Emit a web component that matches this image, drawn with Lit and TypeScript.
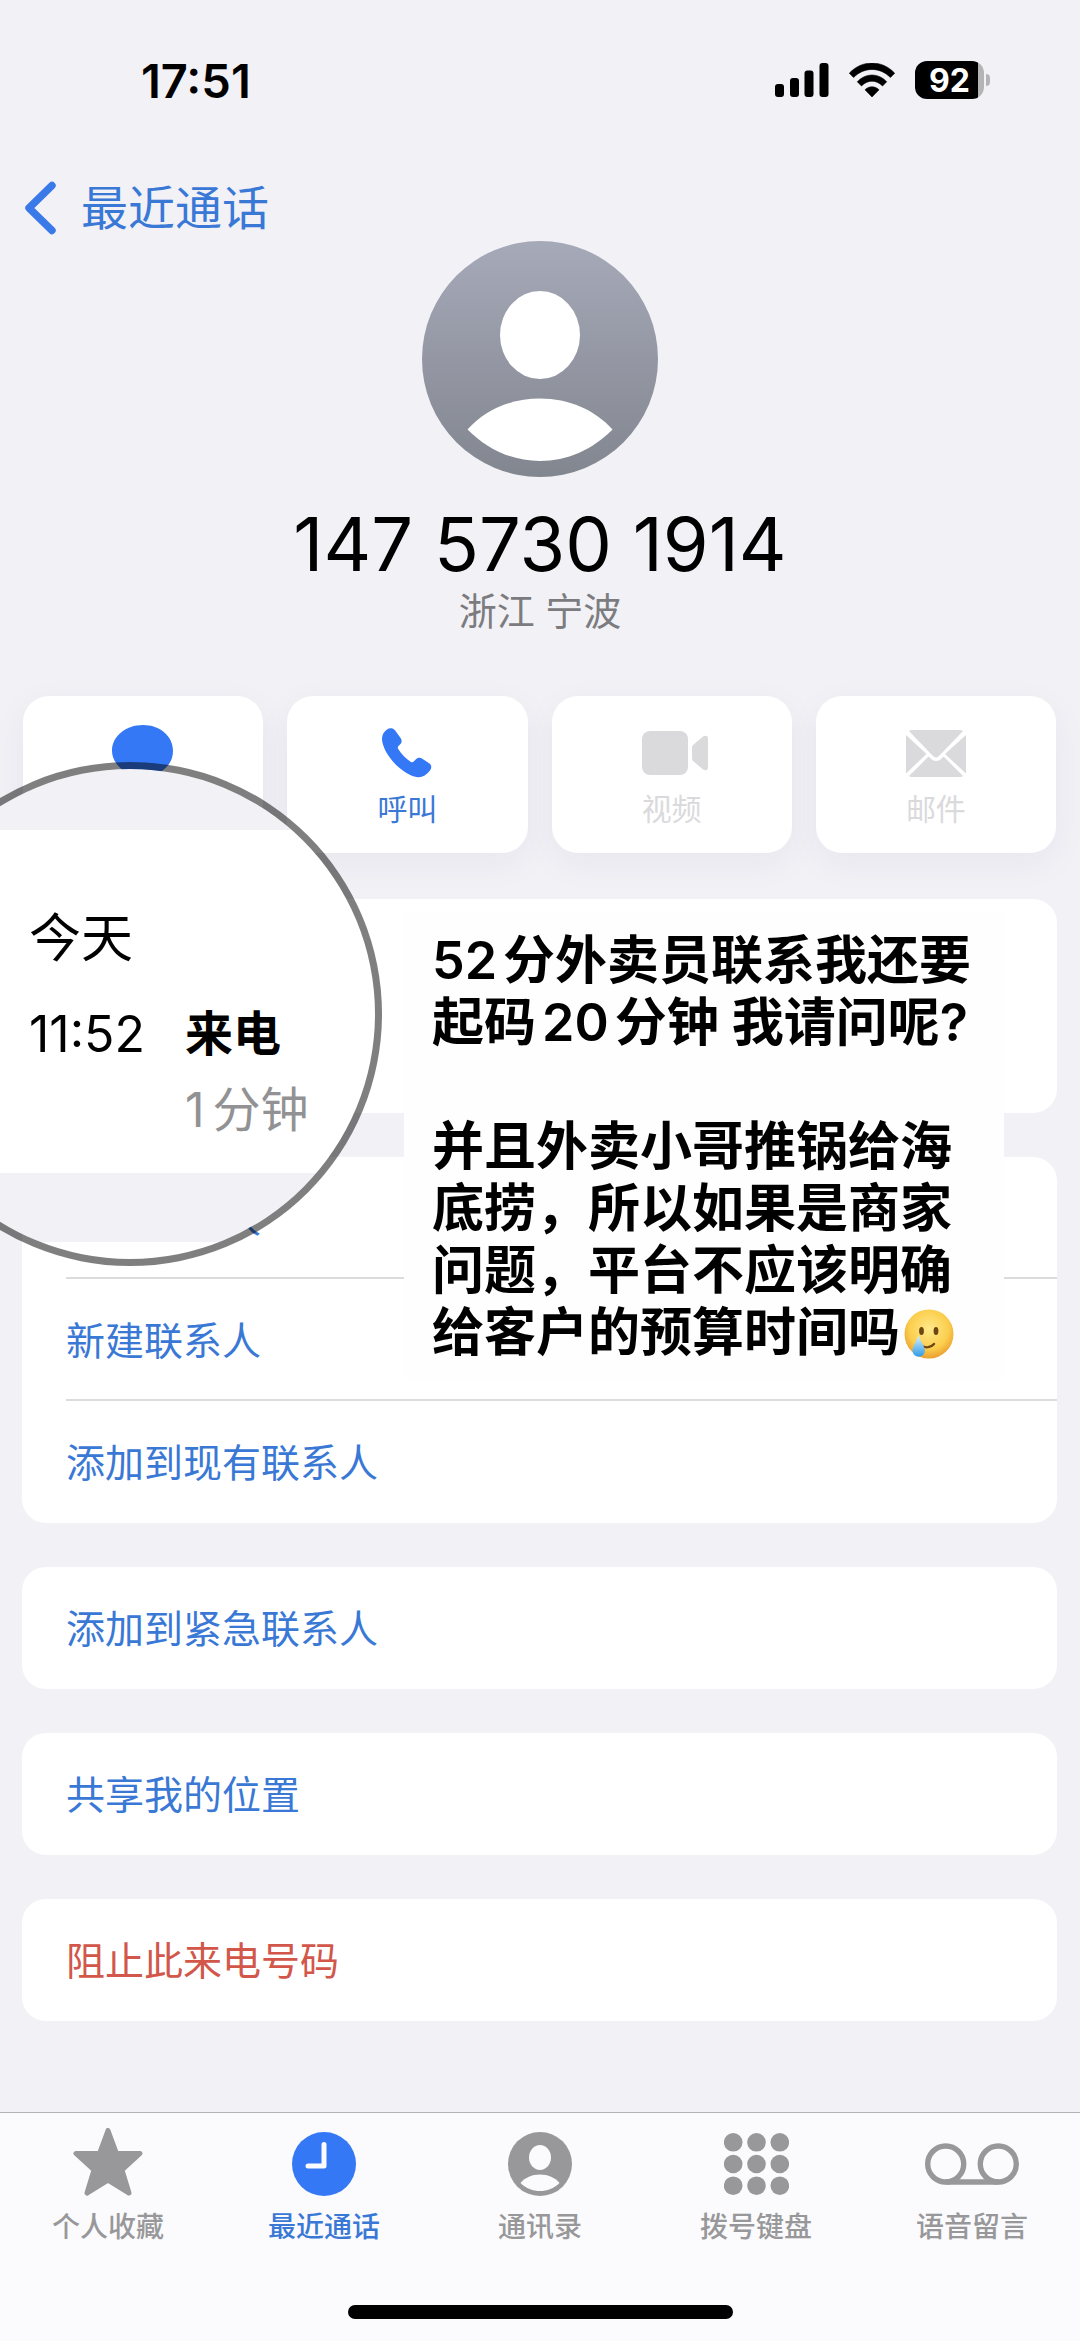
import { LitElement, html, css, svg } from "lit";
import { customElement, property } from "lit/decorators.js";

const iconArt = {
  back: { box: "0 0 32 54", art: svg`<path d="M28 4.500 5 27l23 22.500" fill="none" stroke="currentColor" stroke-width="7.400" stroke-linecap="round" stroke-linejoin="round"/>` },
  message: { box: "0 0 62 56", art: svg`<path d="M31 0C48 0 61 11 61 26S48 51 31 51c-3 0-6 0-9-1-4 3-9 5-15 5 3-3 5-6 5-9C5 41 0 34 0 26 0 11 14 0 31 0Z" fill="currentColor"/>` },
  call: { box: "0 0 50 50", art: svg`<path d="M5 1.500C7.500-.3 11-.3 13 2.300L18.600 10c1.600 2.300 1.300 4.800-.6 6.600l-1.600 1.500c-.8.800-.8 1.900-.2 3 3.300 5.300 7.700 9.700 12.700 12.800 1 .6 2 .5 2.800-.3l2-2.200c1.800-1.900 4.200-2.300 6.600-.7l7.200 4.900c2 1.400 2.500 4.400.5 6.900C44.500 47 40.500 49.500 36 49.200 29 48.700 18.500 42.500 10.500 33 4.500 26 .3 17.500 0 11.200-.1 7 2 3.500 5 1.500Z" fill="currentColor"/>` },
  video: { box: "-6 0 72 44", art: svg`<rect width="46" height="44" rx="8" fill="currentColor"/><path d="M50 17c0-1.500.5-2.500 1.600-3.400L60.500 6C63 4 66 4.500 66 7.500v29c0 3-3 3.500-5.500 1.500l-8.900-7.600C50.500 29.500 50 28.500 50 27Z" fill="currentColor"/>` },
  mail: { box: "0 0 60 47", art: svg`<path d="M3 1C4 .3 5 0 6.500 0h47c1.500 0 2.500.3 3.500 1L33.500 25.500c-2.600 2.600-4.500 2.600-7 0ZM0 5l20.500 19L0 43.500ZM60 5v38.500L39 24ZM22.500 26.500l2.500 2.300c3.500 3 7 3 10.300 0l2.300-2.300L57 46c-1 .7-2 1-3.500 1h-47c-1.500 0-2.500-.3-3.500-1Z" fill="currentColor"/>` },
  star: { box: "0 0 70 68", art: svg`<path d="M35 2.500 43.500 25.500H67L49 42 56 65 35 52 14 65l7-23L3 25.500H26.500Z" fill="currentColor" stroke="currentColor" stroke-width="5" stroke-linejoin="round"/>` },
  clock: { box: "0 0 64 64", art: svg`<circle cx="32" cy="32" r="32" fill="currentColor"/><path d="M32 12.500v21.500H16" fill="none" stroke="#fbfbfd" stroke-width="5" stroke-linecap="round" stroke-linejoin="round"/>` },
  person: { box: "0 0 64 64", art: svg`<circle cx="32" cy="32" r="32" fill="currentColor"/><ellipse cx="32" cy="25.500" rx="11" ry="12.500" fill="#fbfbfd"/><path d="M12.500 51C17 45.500 24 42.500 32 42.500S47 45.500 51.500 51C46 56.500 39 59 32 59s-14-2.500-19.500-8Z" fill="#fbfbfd"/>` },
  keypad: { box: "0 0 65 62", art: svg`${[9.2, 32.5, 55.8].map(x => [9.3, 31, 52.7].map(y => svg`<circle cx=${x} cy=${y} r="9.300" fill="currentColor"/>`))}` },
  voicemail: { box: "0 0 94 42", art: svg`<g fill="none" stroke="currentColor" stroke-width="5.400"><circle cx="20.700" cy="21" r="18"/><circle cx="73.300" cy="21" r="18"/><path d="M20.700 39h52.600"/></g>` },
  signal: { box: "0 0 54 34", art: svg`<rect y="21" width="9" height="13" rx="3"/><rect x="15" y="15" width="9" height="19" rx="3"/><rect x="29.500" y="7.500" width="9" height="26.500" rx="3"/><rect x="44.500" width="9" height="34" rx="3"/>` },
  wifi: { box: "0 0 46 34", art: svg`<path d="M23 34l-7-7.200c3.800-4 10.200-4 14 0ZM8.300 18.800c8.200-9 21.200-9 29.400 0l-4.200 4.200c-6-6.400-15-6.400-21 0ZM.3 10.200C13-3.400 33-3.400 45.700 10.200L41.400 14.500c-10.400-10.700-26.400-10.700-36.800 0Z" stroke="#000" stroke-width=".6" stroke-linejoin="round"/>` },
  avatar: { box: "0 0 236 236", art: svg`<defs><linearGradient id="shade" x1="0" y1="0" x2="0" y2="1"><stop offset="0" stop-color="#a6a9b8"/><stop offset="1" stop-color="#82868f"/></linearGradient></defs><circle cx="118" cy="118" r="118" fill="url(#shade)"/><ellipse cx="118" cy="94" rx="40" ry="44" fill="#fff"/><path d="M45.500 188.500C63 169 89 157.500 118 157.500s55 11.500 72.500 31C170 209 145 220 118 220s-52-11-72.500-31.500Z" fill="#fff"/>` },
  tearful: { box: "0 0 50 50", art: svg`<defs><radialGradient id="face" cx=".5" cy=".4" r=".62"><stop offset="0" stop-color="#ffe98a"/><stop offset=".65" stop-color="#fbce4d"/><stop offset="1" stop-color="#e99a2c"/></radialGradient><linearGradient id="drop" x1="0" y1="0" x2="0" y2="1"><stop offset="0" stop-color="#d9f3ff"/><stop offset="1" stop-color="#2f9be6"/></linearGradient></defs><circle cx="25" cy="25" r="24.500" fill="url(#face)"/><ellipse cx="17.500" cy="22" rx="2.400" ry="4" fill="#6d4612"/><ellipse cx="32" cy="22" rx="2.400" ry="4" fill="#6d4612"/><path d="M19 37.500c4 1.500 8.500.5 11-2.500" fill="none" stroke="#6d4612" stroke-width="2.400" stroke-linecap="round"/><path d="M14.500 26c-2 7-6 11-6 15.500a6.200 6.200 0 0 0 12.400 0c0-4.500-4.400-8.500-6.400-15.500Z" fill="url(#drop)"/>` },
};
type IconName = keyof typeof iconArt;

@customElement("phone-icon")
export class PhoneIcon extends LitElement {
  @property() name: IconName = "star";
  static styles = css`
    :host { display: block; flex: none; }
    svg { display: block; width: 100%; height: 100%; }
  `;
  render() {
    const { box, art } = iconArt[this.name];
    return html`<svg viewBox=${box} aria-hidden="true">${art}</svg>`;
  }
}

const actions: { icon: IconName; label: string; off?: boolean }[] = [
  { icon: "message", label: "" },
  { icon: "call", label: "呼叫" },
  { icon: "video", label: "视频", off: true },
  { icon: "mail", label: "邮件", off: true },
];

const groups: string[][] = [
  ["共享联系人", "新建联系人", "添加到现有联系人"],
  ["添加到紧急联系人"],
  ["共享我的位置"],
];

const tabs: { icon: IconName; label: string; on?: boolean }[] = [
  { icon: "star", label: "个人收藏" },
  { icon: "clock", label: "最近通话", on: true },
  { icon: "person", label: "通讯录" },
  { icon: "keypad", label: "拨号键盘" },
  { icon: "voicemail", label: "语音留言" },
];

@customElement("app-root")
export class AppRoot extends LitElement {
  static styles = css`
    :host {
      --page: #f1f1f6;
      --blue: #3478f6;
      --link: #3a78d6;
      display: flex;
      flex-direction: column;
      min-height: 100vh;
      overflow: hidden;
      background: var(--page);
      color: #000;
      font-family: Inter, "Noto Sans CJK SC", sans-serif;
    }
    * { box-sizing: border-box; }
    button { font: inherit; border: 0; padding: 0; margin: 0; background: none; color: inherit; }
    a { color: inherit; text-decoration: none; }

    .status { display: flex; justify-content: space-between; align-items: center; height: 160px; padding: 0 90px 0 141px; }
    .clock { font-size: 47px; font-weight: 600; }
    .radios { display: flex; align-items: center; }
    .signal { width: 54px; height: 34px; }
    .wifi { width: 46px; height: 34px; margin: 0 20px; }
    .battery {
      display: flex; align-items: center; justify-content: center;
      width: 69px; height: 38px; border-radius: 12px;
      background: linear-gradient(90deg, #000 63px, #b4b4b6 63px);
      color: #fff; font-size: 32px; font-weight: 700;
    }
    .nub { width: 4px; height: 12px; margin-left: 2px; border-radius: 0 6px 6px 0; background: #b4b4b6; }

    .nav { display: flex; height: 66px; margin-top: 15px; padding: 0 24px; }
    .back { display: flex; align-items: center; gap: 25px; color: var(--link); font-size: 47px; line-height: 66px; }
    .chevron { width: 32px; height: 54px; color: #3a7ae8; }

    .profile { display: flex; flex-direction: column; align-items: center; }
    .avatar { width: 236px; height: 236px; }
    .number { margin: 27px 0 0; font-size: 74px; font-weight: 400; line-height: 80px; }
    .region { margin: 0; font-size: 38px; line-height: 54px; color: #7c7c80; }

    .actions { display: grid; grid-template-columns: repeat(4, 1fr); gap: 24px; margin-top: 58px; padding: 0 24px 0 23px; }
    .action {
      display: flex; flex-direction: column; align-items: center;
      height: 157px; padding-top: 27px; border-radius: 26px;
      background: #fff; box-shadow: 0 10px 36px rgba(40, 40, 70, 0.05);
      color: var(--blue); font-size: 30px; line-height: 40px;
    }
    .off { color: #dadadc; }
    .glyph { display: flex; align-items: center; justify-content: center; height: 60px; }
    .act-message { width: 62px; height: 56px; }
    .act-call { width: 50px; height: 50px; }
    .act-video { width: 72px; height: 44px; }
    .act-mail { width: 60px; height: 47px; }
    .caption { margin-top: 6px; color: var(--link); }
    .off .caption { color: inherit; }

    .list { display: flex; flex-direction: column; gap: 44px; margin-top: 46px; padding: 0 23px 0 22px; }
    .history { position: relative; z-index: 1; height: 214px; border-radius: 24px; background: #fff; }
    .group { display: flex; flex-direction: column; border-radius: 24px; background: #fff; overflow: hidden; }
    .row { display: flex; padding-left: 44px; color: var(--link); font-size: 39px; line-height: 117px; }
    .cell { flex: 1; padding-top: 3px; text-align: left; border-bottom: 2px solid #dcdcde; }
    .row:last-child .cell { border-bottom-color: transparent; }
    .danger { color: #d2574a; }

    .note {
      position: absolute; left: 382px; top: 12px;
      width: 600px; padding: 19px 28px 16px;
      background: #fefefe; font-size: 52px; font-weight: 600; line-height: 62px; white-space: nowrap;
    }
    .note p { margin: 0 0 62px; }
    .note p:last-child { margin: 0; }
    .num { margin: 0 6px 0 0; }
    .mid { margin: 0 6px; }
    .emoji { display: inline-block; width: 50px; height: 50px; margin-left: 4px; vertical-align: -8px; }

    .lens {
      position: absolute; left: -144px; top: -137px;
      width: 504px; height: 504px; padding: 138px 0 0 144px;
      border: 7px solid rgba(0, 0, 0, 0.5); border-radius: 50%;
      background: linear-gradient(var(--page) 61px, #fff 61px, #fff 404px, var(--page) 404px, var(--page) 473px, transparent 473px) padding-box;
    }
    .day { margin: 0 0 33px; font-size: 52px; font-weight: 400; line-height: 64px; }
    .record { display: grid; grid-template-columns: 156px auto; justify-content: start; row-gap: 16px; font-size: 48px; line-height: 60px; }
    .at { font-size: 50px; }
    .kind { font-weight: 600; }
    .span { grid-column: 2; color: #929294; }
    .count { margin-right: 8px; }

    .dock { margin-top: auto; height: 229px; border-top: 1px solid #b2b2b4; background: #fbfbfd; }
    .tabs { display: grid; grid-template-columns: repeat(5, 1fr); height: 192px; }
    .tab { display: flex; flex-direction: column; align-items: center; padding-top: 14px; color: #98989a; font-size: 28px; font-weight: 500; line-height: 40px; }
    .tab .glyph { height: 74px; margin-bottom: 6px; }
    .on { color: var(--blue); }
    .on .name { color: var(--link); }
    .tab-star { width: 70px; height: 68px; margin-bottom: 4px; }
    .tab-clock, .tab-person { width: 64px; height: 64px; }
    .tab-keypad { width: 65px; height: 62px; }
    .tab-voicemail { width: 94px; height: 42px; }
    .home { width: 385px; height: 14px; margin: 0 auto; border-radius: 7px; background: #000; }
  `;

  render() {
    return html`
      <header>
        <div class="status">
          <time class="clock">17:51</time>
          <div class="radios">
            <phone-icon class="signal" name="signal"></phone-icon>
            <phone-icon class="wifi" name="wifi"></phone-icon>
            <span class="battery">92</span><span class="nub"></span>
          </div>
        </div>
        <nav class="nav">
          <a class="back" href="#recents"><phone-icon class="chevron" name="back"></phone-icon>最近通话</a>
        </nav>
      </header>
      <section class="profile">
        <phone-icon class="avatar" name="avatar"></phone-icon>
        <h1 class="number">147 5730 1914</h1>
        <p class="region">浙江 宁波</p>
      </section>
      <section class="actions">
        ${actions.map(a => html`
          <button class="action ${a.off ? "off" : ""}" ?disabled=${a.off} aria-label=${a.label || "信息"}>
            <span class="glyph"><phone-icon class="act-${a.icon}" name=${a.icon}></phone-icon></span>
            <span class="caption">${a.label}</span>
          </button>`)}
      </section>
      <main class="list">
        <section class="history">
          <div class="note">
            <p><span class="num">52</span>分外卖员联系我还要<br>起码<span class="mid">20</span>分钟 我请问呢?</p>
            <p>并且外卖小哥推锅给海<br>底捞，所以如果是商家<br>问题，平台不应该明确<br>给客户的预算时间吗<phone-icon class="emoji" name="tearful"></phone-icon></p>
          </div>
          <div class="lens">
            <h2 class="day">今天</h2>
            <div class="record">
              <time class="at">11:52</time><span class="kind">来电</span>
              <span class="span"><span class="count">1</span>分钟</span>
            </div>
          </div>
        </section>
        ${groups.map(rows => html`
          <section class="group">
            ${rows.map(r => html`<div class="row"><button class="cell">${r}</button></div>`)}
          </section>`)}
        <section class="group">
          <div class="row danger"><button class="cell">阻止此来电号码</button></div>
        </section>
      </main>
      <footer class="dock">
        <nav class="tabs">
          ${tabs.map(t => html`
            <a class="tab ${t.on ? "on" : ""}" href="#${t.icon}">
              <span class="glyph"><phone-icon class="tab-${t.icon}" name=${t.icon}></phone-icon></span>
              <span class="name">${t.label}</span>
            </a>`)}
        </nav>
        <div class="home"></div>
      </footer>
    `;
  }
}
